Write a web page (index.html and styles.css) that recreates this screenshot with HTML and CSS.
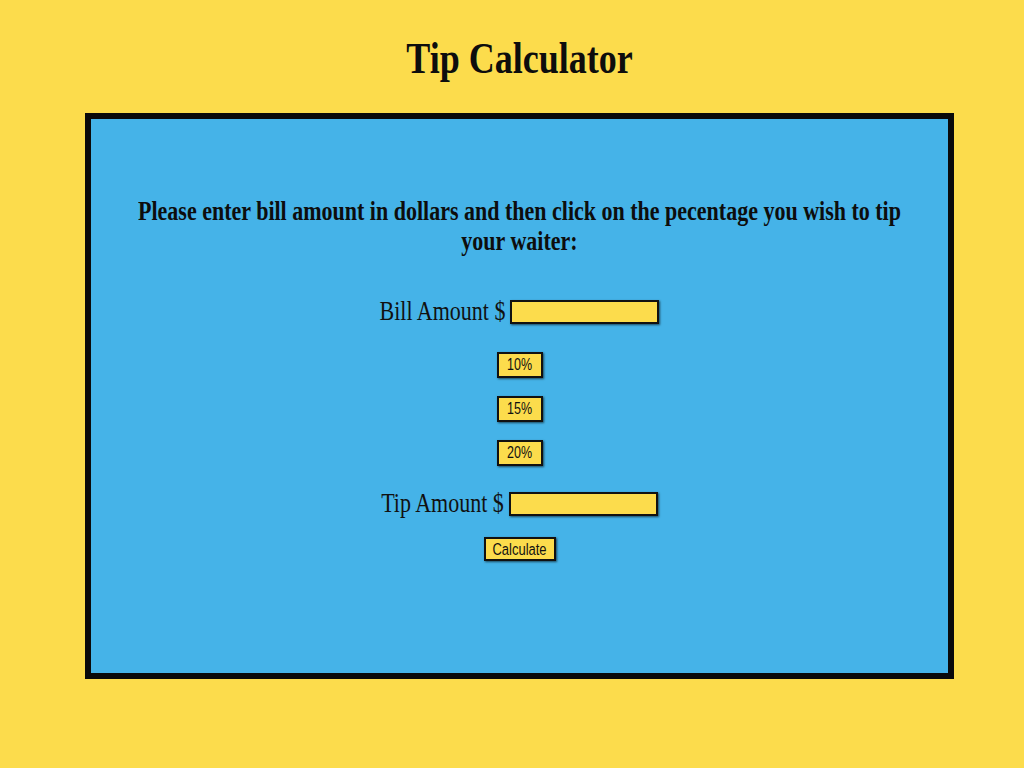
FILE: index.html
```html
<!DOCTYPE html>
<html lang="en">
<head>
<meta charset="utf-8">
<title>Tip Calculator</title>
<link rel="stylesheet" href="styles.css">
</head>
<body>
  <h1 class="title">Tip Calculator</h1>
  <main class="panel">
    <p class="intro">Please enter bill amount in dollars and then click on the pecentage you wish to tip your waiter:</p>
    <div class="field field-bill">
      <label class="field-label" for="bill">Bill Amount $</label>
      <input class="field-input" id="bill" type="text">
    </div>
    <div class="pcts">
      <button class="btn btn-pct" type="button"><span class="btn-text">10%</span></button>
      <button class="btn btn-pct" type="button"><span class="btn-text">15%</span></button>
      <button class="btn btn-pct" type="button"><span class="btn-text">20%</span></button>
    </div>
    <div class="field field-tip">
      <label class="field-label" for="tip">Tip Amount $</label>
      <input class="field-input" id="tip" type="text">
    </div>
    <button class="btn btn-calc" type="button"><span class="btn-text">Calculate</span></button>
  </main>
</body>
</html>
```

FILE: styles.css
```css
html, body {
  margin: 0;
  padding: 0;
}

body {
  background: #fcdc4c;
  padding-left: 15px;
  padding-bottom: 89px;
  font-family: "Liberation Serif", "Times New Roman", serif;
  color: #111;
  display: flex;
  flex-direction: column;
  align-items: center;
}

.title {
  margin: 38px 0 35px;
  font-size: 36px;
  line-height: 40px;
  font-weight: bold;
  color: #0d0d0d;
  transform: scaleY(1.22);
}

.panel {
  box-sizing: border-box;
  width: 869px;
  height: 566px;
  background: #45b3e8;
  border: 6px solid #0a0a0a;
  display: flex;
  flex-direction: column;
  align-items: center;
  padding: 82px 30px 0;
}

.intro {
  margin: 0;
  width: 790px;
  text-align: center;
  font-size: 22px;
  line-height: 25px;
  font-weight: bold;
  color: #0d0d0d;
  transform: scaleY(1.2);
}

.field {
  display: flex;
  align-items: center;
  gap: 5px;
  height: 24px;
}

.field-bill {
  margin-top: 49px;
}

.field-tip {
  margin-top: 26px;
}

.field-label {
  font-size: 22px;
  line-height: 24px;
  color: #111;
  transform: scaleY(1.2);
}

.field-input {
  box-sizing: border-box;
  width: 149px;
  height: 24px;
  margin: 0;
  padding: 0 4px;
  background: #fcdc4c;
  border: 2px solid #111;
  box-shadow: 1px 1px 2px rgba(0, 0, 0, 0.6);
  font: 14px "Liberation Sans", Arial, sans-serif;
}

.pcts {
  display: flex;
  flex-direction: column;
  align-items: center;
  gap: 18px;
  margin-top: 28px;
}

.btn {
  box-sizing: border-box;
  margin: 0;
  padding: 0;
  background: #fcdc4c;
  border: 2px solid #111;
  box-shadow: 1px 1px 2px rgba(0, 0, 0, 0.6);
  font-family: "Liberation Sans", Arial, sans-serif;
  font-size: 12.5px;
  color: #111;
  border-radius: 0;
}

.btn-text {
  display: inline-block;
  transform: scaleY(1.25);
}

.btn-pct {
  width: 46px;
  height: 26px;
}

.btn-calc {
  width: 72px;
  height: 24px;
  margin-top: 21px;
  font-size: 13px;
}
```
